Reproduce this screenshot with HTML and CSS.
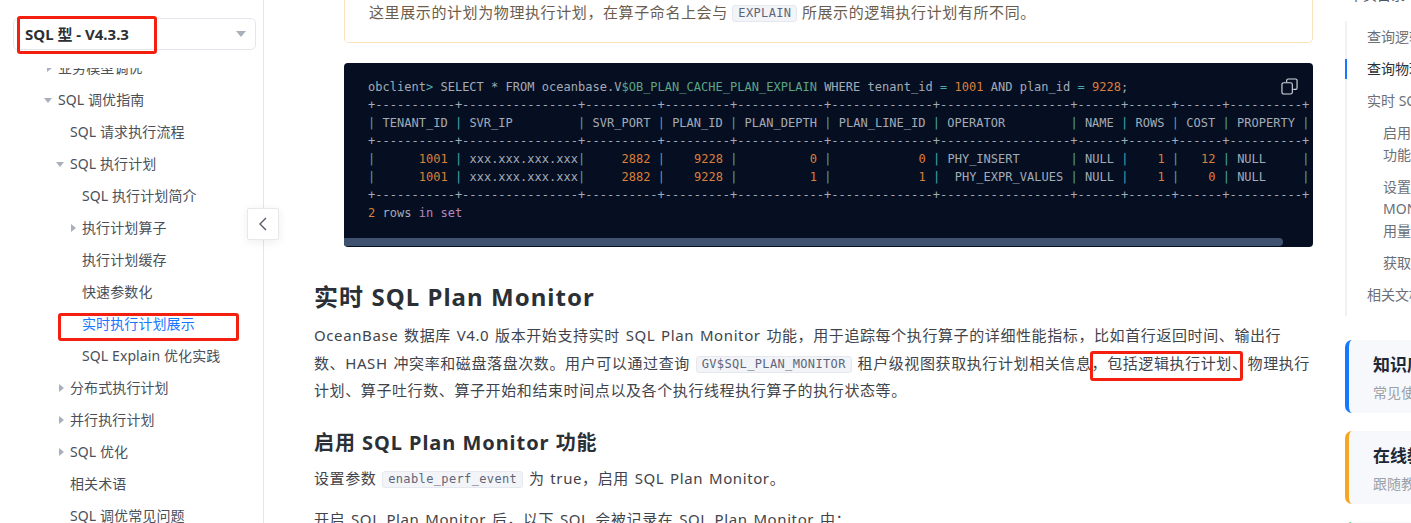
FILE: index.html
```html
<!DOCTYPE html>
<html lang="zh">
<head>
<meta charset="utf-8">
<title>实时 SQL Plan Monitor</title>
<link rel="stylesheet" href="styles.css">
</head>
<body>
<div class="page">
  <aside class="sidebar">
    <div class="select"><span>SQL 型 - V4.3.3</span><i class="select-caret"></i></div>
    <nav class="tree">
      <ul class="tree-list">
        <li class="l1"><i class="caret right"></i>业务模型调优</li>
        <li class="l1"><i class="caret down"></i>SQL 调优指南</li>
        <li class="l2">SQL 请求执行流程</li>
        <li class="l2"><i class="caret down"></i>SQL 执行计划</li>
        <li class="l3">SQL 执行计划简介</li>
        <li class="l3"><i class="caret right"></i>执行计划算子</li>
        <li class="l3">执行计划缓存</li>
        <li class="l3">快速参数化</li>
        <li class="l3 active">实时执行计划展示</li>
        <li class="l3">SQL Explain 优化实践</li>
        <li class="l2"><i class="caret right"></i>分布式执行计划</li>
        <li class="l2"><i class="caret right"></i>并行执行计划</li>
        <li class="l2"><i class="caret right"></i>SQL 优化</li>
        <li class="l2">相关术语</li>
        <li class="l2">SQL 调优常见问题</li>
      </ul>
    </nav>
  </aside>
  <button class="collapse" aria-label="收起"><svg width="10" height="16" viewBox="0 0 10 16"><path d="M8 2 2 8l6 6" fill="none" stroke="#555c66" stroke-width="1.4"/></svg></button>

  <main class="content">
    <div class="note">这里展示的计划为物理执行计划，在算子命名上会与 <code class="ic">EXPLAIN</code> 所展示的逻辑执行计划有所不同。</div>
    <div class="codeblock">
      <svg class="copy" width="17" height="17" viewBox="0 0 18 18" fill="none" stroke="#d5d9df" stroke-width="1.2"><rect x="1" y="5" width="11" height="12" rx="2"/><path d="M6 4.500V2.500a1.500 1.500 0 0 1 1.500-1.500h8a1.500 1.500 0 0 1 1.500 1.500v8a1.500 1.500 0 0 1-1.500 1.500H13"/></svg>
<pre class="code">obclient<b class="t">&gt;</b> SELECT * FROM oceanbase.V<b class="g">$OB_PLAN_CACHE_PLAN_EXPLAIN</b> WHERE tenant_id <b class="t">=</b> <b class="o">1001</b> AND plan_id <b class="t">=</b> <b class="o">9228</b>;
+-----------+----------------+----------+---------+------------+--------------+------------------+------+------+------+----------+
<b class="t">|</b> TENANT_ID <b class="t">|</b> SVR_IP         <b class="t">|</b> SVR_PORT <b class="t">|</b> PLAN_ID <b class="t">|</b> PLAN_DEPTH <b class="t">|</b> PLAN_LINE_ID <b class="t">|</b> OPERATOR         <b class="t">|</b> NAME <b class="t">|</b> ROWS <b class="t">|</b> COST <b class="t">|</b> PROPERTY <b class="t">|</b>
+-----------+----------------+----------+---------+------------+--------------+------------------+------+------+------+----------+
<b class="t">|</b>      <b class="o">1001</b> <b class="t">|</b> xxx.xxx.xxx.xxx<b class="t">|</b>     <b class="o">2882</b> <b class="t">|</b>    <b class="o">9228</b> <b class="t">|</b>          <b class="o">0</b> <b class="t">|</b>            <b class="o">0</b> <b class="t">|</b> PHY_INSERT       <b class="t">|</b> NULL <b class="t">|</b>    <b class="o">1</b> <b class="t">|</b>   <b class="o">12</b> <b class="t">|</b> NULL     <b class="t">|</b>
<b class="t">|</b>      <b class="o">1001</b> <b class="t">|</b> xxx.xxx.xxx.xxx<b class="t">|</b>     <b class="o">2882</b> <b class="t">|</b>    <b class="o">9228</b> <b class="t">|</b>          <b class="o">1</b> <b class="t">|</b>            <b class="o">1</b> <b class="t">|</b>  PHY_EXPR_VALUES <b class="t">|</b> NULL <b class="t">|</b>    <b class="o">1</b> <b class="t">|</b>    <b class="o">0</b> <b class="t">|</b> NULL     <b class="t">|</b>
+-----------+----------------+----------+---------+------------+--------------+------------------+------+------+------+----------+
<b class="o">2</b> rows <b class="p">in</b> <b class="p">set</b></pre>
      <div class="scrollbar"><div class="thumb"></div></div>
    </div>
    <h2 class="h2">实时 SQL Plan Monitor</h2>
    <p class="para para-first">OceanBase 数据库 V4.0 版本开始支持实时 SQL Plan Monitor 功能，用于追踪每个执行算子的详细性能指标，比如首行返回时间、输出行<br>数、HASH 冲突率和磁盘落盘次数。用户可以通过查询 <code class="ic">GV$SQL_PLAN_MONITOR</code> 租户级视图获取执行计划相关信息，包括逻辑执行计划、物理执行<br>计划、算子吐行数、算子开始和结束时间点以及各个执行线程执行算子的执行状态等。</p>
    <h3 class="h3">启用 SQL Plan Monitor 功能</h3>
    <p class="para para-short">设置参数 <code class="ic">enable_perf_event</code> 为 true，启用 SQL Plan Monitor。</p>
    <p class="para para-next">开启 SQL Plan Monitor 后，以下 SQL 会被记录在 SQL Plan Monitor 中：</p>
  </main>

  <aside class="right">
    <div class="toc-title">本页目录</div>
    <ul class="toc">
      <li>查询逻辑执行计划</li>
      <li class="current">查询物理执行计划</li>
      <li>实时 SQL Plan Monitor</li>
      <li class="sub">启用 SQL Plan Monitor<br>功能</li>
      <li class="sub">设置 SQL 的<br>MONITOR 内存<br>用量</li>
      <li class="sub">获取执行计划</li>
      <li>相关文档</li>
    </ul>
    <div class="card blue"><div class="card-title">知识库问答</div><div class="card-sub">常见使用问题</div></div>
    <div class="card orange"><div class="card-title">在线教程</div><div class="card-sub">跟随教程学习</div></div>
    <div class="card green"><div class="card-title">社区论坛</div><div class="card-sub">交流讨论</div></div>
  </aside>
</div>
<div class="mark mark-version"></div>
<div class="mark mark-nav"></div>
<div class="mark mark-text"></div>
</body>
</html>
```
FILE: styles.css
```css
* { box-sizing: border-box; }
html, body { margin: 0; padding: 0; height: 523px; overflow: hidden; background: #fff; }
body { font-family: "Noto Sans", "Noto Sans CJK SC", sans-serif; color: #3c4148; position: relative; }
.page { display: flex; height: 523px; overflow: hidden; }

.sidebar { flex: 0 0 264px; height: 523px; border-right: 1px solid #e3e6ea; padding: 18px 7px 0 13px; display: flex; flex-direction: column; overflow: hidden; }
.select { flex: none; height: 32px; border: 1px solid #e4e7ec; border-radius: 5px; display: flex; align-items: center; justify-content: space-between; padding: 0 9px 2px 11px; font-size: 15px; font-weight: 700; color: #2b2f36; }
.select-caret { width: 0; height: 0; margin-top: 2px; border-left: 5px solid transparent; border-right: 5px solid transparent; border-top: 6px solid #a9b0bb; }
.tree { flex: 1; overflow: hidden; margin: 18px -7px 0 -13px; }
.tree-list { list-style: none; margin: -16px 0 0; padding: 0; }
.tree-list li { height: 32px; line-height: 32px; font-size: 14px; letter-spacing: .1px; color: #4b5058; display: flex; align-items: center; white-space: nowrap; position: relative; }
.l1 { padding-left: 58px; }
.l2 { padding-left: 70px; }
.l3 { padding-left: 82px; }
.tree-list li.active { color: #1677ff; }
.caret { position: absolute; width: 0; height: 0; }
.caret.down { border-left: 4px solid transparent; border-right: 4px solid transparent; border-top: 5px solid #a9b0bb; margin-left: -14px; }
.caret.right { border-top: 4px solid transparent; border-bottom: 4px solid transparent; border-left: 5px solid #a9b0bb; margin-left: -11px; }

.collapse { position: absolute; left: 247px; top: 208px; width: 32px; height: 32px; padding: 0; background: #fff; border: 1px solid #e6e8ec; border-radius: 2px; box-shadow: 0 2px 10px rgba(30, 40, 60, .08); display: flex; align-items: center; justify-content: center; }

.content { flex: 0 0 999px; margin-left: 50px; font-size: 15px; }
.note { margin-left: 30px; height: 43px; padding: 0 24px 0; line-height: 24px; border: 1px solid #fde3bd; border-top: 0; border-radius: 0 0 5px 5px; color: #6b5d4d; font-size: 15px; letter-spacing: .6px; }
.ic { display: inline-block; line-height: 15px; vertical-align: 1px; font-family: "DejaVu Sans Mono", monospace; font-size: 12px; letter-spacing: .36px; color: #5d6678; background: #f3f4f8; border: 1px solid #e6e8ef; border-radius: 3px; padding: 0 5px; }

.codeblock { position: relative; margin: 20px 0 0 30px; height: 184px; background: #060f22; border-radius: 4px; overflow: hidden; display: flex; flex-direction: column; }
.code { flex: 1; margin: 0; padding: 15px 0 0 24px; font-family: "DejaVu Sans Mono", monospace; font-size: 12px; letter-spacing: .015px; line-height: 18px; color: #a3abb6; white-space: pre; overflow: hidden; }
.code b { font-weight: 400; }
.t { color: #4ba6ad; }
.o { color: #db7f3a; }
.g { color: #5da585; }
.p { color: #b886c0; }
.copy { position: absolute; top: 15px; right: 15px; }
.scrollbar { flex: none; height: 9px; }
.thumb { width: 939px; height: 8px; background: #3f5370; border-radius: 0 4px 4px 0; }

.h2 { margin: 34px 0 0; height: 32px; line-height: 32px; font-size: 24px; font-weight: 700; letter-spacing: 1.05px; color: #2b2f36; }
.para { margin: 9px 0 0; font-size: 15px; line-height: 27.500px; letter-spacing: .6px; word-spacing: 1.3px; color: #3f444b; }
.h3 { margin: 24px 0 0; height: 28px; line-height: 28px; font-size: 20px; font-weight: 700; letter-spacing: .95px; color: #2b2f36; }
.para-short { margin-top: 8px; }
.para-next { margin-top: 14px; }

.right { flex: none; width: 260px; margin-left: 32px; }
.toc-title { height: 21px; margin-top: -16px; padding: 0 0 0 4px; font-size: 14px; line-height: 22px; color: #555; margin-bottom: 16px; }
.toc { list-style: none; margin: 0; padding: 0 0 5px; border-left: 2px solid #eff1f4; width: 230px; }
.toc li { font-size: 14px; line-height: 22px; padding: 5px 0 5px 20px; color: #6b7078; position: relative; white-space: nowrap; }
.toc li.sub { padding-left: 36px; }
.toc li.current { color: #2b2f36; }
.toc li.current::before { content: ""; position: absolute; left: -2px; top: 6px; width: 2px; height: 20px; background: #1677ff; }
.card { width: 240px; height: 73px; margin-bottom: 18px; border-radius: 7px; background: #f6f8fb; padding: 12px 0 0 24px; border-left: 4px solid; }
.toc + .card { margin-top: 24px; }
.blue { border-color: #1677ff; }
.orange { border-color: #f5a623; }
.green { border-color: #31c46c; }
.card-title { font-size: 17px; line-height: 26px; font-weight: 700; color: #1d2736; }
.card-sub { font-size: 14px; line-height: 22px; color: #9aa0a8; margin-top: 4px; }

.mark { position: absolute; border: 3px solid #f4200f; border-radius: 3px; pointer-events: none; }
.mark-version { left: 17px; top: 16px; width: 140px; height: 38px; }
.mark-nav { left: 58px; top: 313px; width: 181px; height: 28px; }
.mark-text { left: 1090px; top: 351px; width: 153px; height: 30px; }
```
